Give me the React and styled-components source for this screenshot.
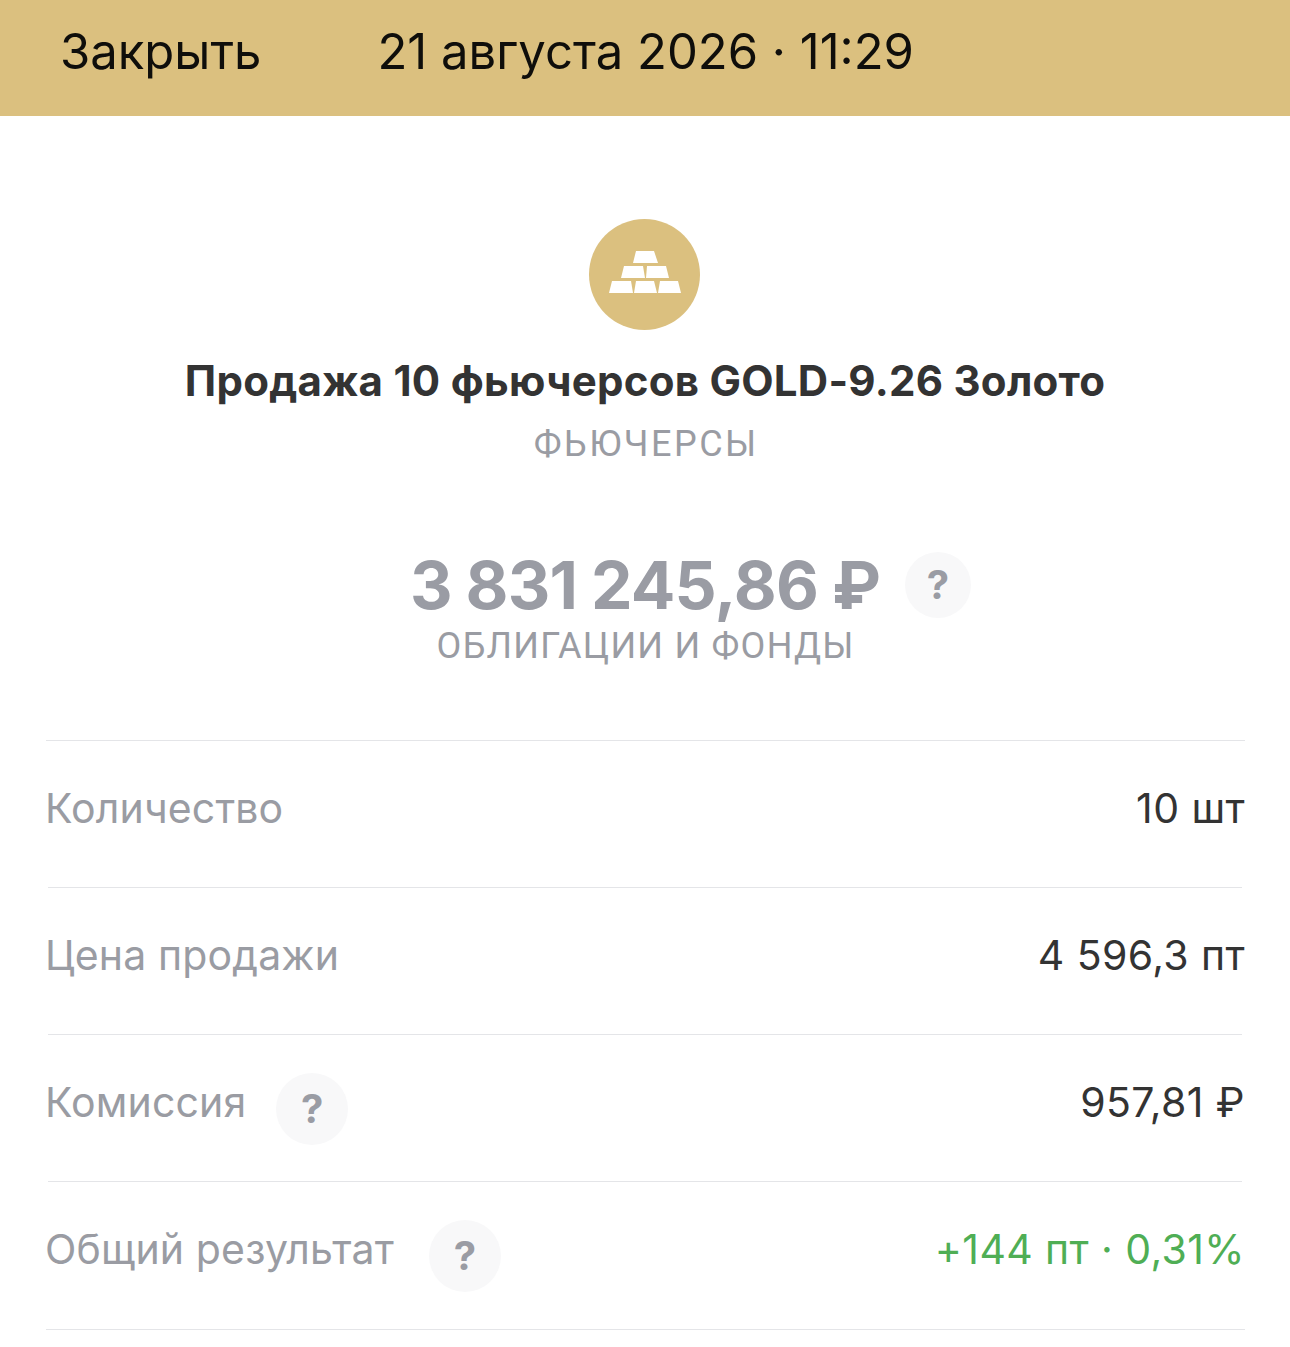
import React from "react";
import styled, { createGlobalStyle } from "styled-components";

const Global = createGlobalStyle`
  html, body {
    margin: 0;
    background: #ffffff;
  }
  body {
    font-family: Inter, Roboto, sans-serif;
  }
`;

const Page = styled.div`
  width: 1290px;
  height: 1347px;
  overflow: hidden;
  background: #ffffff;
`;

const Header = styled.header`
  height: 116px;
  padding: 0 0 14px 60px;
  box-sizing: border-box;
  display: flex;
  align-items: center;
  gap: 116px;
  background: #dbc07f;
  color: #0f0e0b;
  font-size: 49px;
`;

const Hero = styled.section`
  display: flex;
  flex-direction: column;
  align-items: center;
  padding-top: 103px;
`;

const Badge = styled.div`
  width: 111px;
  height: 111px;
  margin-right: 1px;
  padding-bottom: 5px;
  box-sizing: border-box;
  border-radius: 50%;
  background: #dbc07f;
  display: flex;
  align-items: center;
  justify-content: center;
`;

const Title = styled.h1`
  margin: 26px 0 0;
  font-size: 42px;
  line-height: 50px;
  font-weight: 700;
  letter-spacing: 0.27px;
  color: #333333;
`;

const Caption = styled.div`
  margin-top: ${(p) => p.$top}px;
  font-family: Roboto, sans-serif;
  font-size: 36px;
  line-height: 40px;
  letter-spacing: ${(p) => p.$spacing}px;
  text-indent: ${(p) => p.$spacing}px;
  color: #9a9ca3;
`;

const AmountRow = styled.div`
  margin-top: 86px;
  display: flex;
  align-items: center;
  gap: 25px;
  padding-left: 91px;
  height: 70px;
`;

const Amount = styled.div`
  font-size: 66px;
  line-height: 70px;
  font-weight: 700;
  color: #9a9ca4;
  word-spacing: -1px;
  letter-spacing: -0.8px;
`;

const Help = styled.span`
  flex: none;
  width: ${(p) => p.$size}px;
  height: ${(p) => p.$size}px;
  border-radius: 50%;
  background: #f8f8f9;
  color: #9a9ca4;
  display: flex;
  align-items: center;
  justify-content: center;
  font-size: 40px;
  line-height: 1;
  font-weight: 700;
`;

const List = styled.div`
  margin: 74px 45px 0 46px;
`;

const Divider = styled.div`
  height: 1px;
  background: #e4e5e8;
  margin: ${(p) => (p.$last ? 1 : 0)}px ${(p) => (p.$inset ? 3 : 0)}px 0 ${(p) => (p.$inset ? 2 : 0)}px;
`;

const Row = styled.div`
  height: 146px;
  margin-left: -1px;
  box-sizing: border-box;
  padding-bottom: 12px;
  display: flex;
  align-items: center;
  justify-content: space-between;
  font-size: 41px;
`;

const Label = styled.div`
  display: flex;
  align-items: center;
  gap: ${(p) => p.$gap || 31}px;
  letter-spacing: 0.15px;
  color: #9a9ca3;
`;

const Value = styled.div`
  letter-spacing: 0.4px;
  color: ${(p) => (p.$positive ? "#4fae55" : "#333333")};
`;

const RowHelp = styled(Help)`
  margin-top: 7px;
  margin-bottom: -7px;
`;

function GoldBars() {
  return (
    <svg width="72" height="42" viewBox="0 0 72 42" fill="#ffffff">
      <path d="M 27 0 H 45 L 49 12 H 24 Z" />
      <path d="M 15 15 H 34 L 36 27 H 12 Z" />
      <path d="M 38 15 H 57 L 60 27 H 37 Z" />
      <path d="M 3 30 H 22 L 24 42 H 0 Z" />
      <path d="M 27 30 H 45 L 48 42 H 25 Z" />
      <path d="M 51 30 H 69 L 72 42 H 49 Z" />
    </svg>
  );
}

export default function App() {
  return (
    <Page>
      <Global />
      <Header>
        <span>Закрыть</span>
        <span>21 августа 2026 · 11:29</span>
      </Header>
      <Hero>
        <Badge>
          <GoldBars />
        </Badge>
        <Title>Продажа 10 фьючерсов GOLD-9.26 Золото</Title>
        <Caption $top={18} $spacing={2.5}>
          ФЬЮЧЕРСЫ
        </Caption>
        <AmountRow>
          <Amount>3 831 245,86 ₽</Amount>
          <Help $size={66}>?</Help>
        </AmountRow>
        <Caption $top={6} $spacing={1.25}>
          ОБЛИГАЦИИ И ФОНДЫ
        </Caption>
      </Hero>
      <List>
        <Divider />
        <Row>
          <Label>Количество</Label>
          <Value>10 шт</Value>
        </Row>
        <Divider $inset />
        <Row>
          <Label>Цена продажи</Label>
          <Value>4 596,3 пт</Value>
        </Row>
        <Divider $inset />
        <Row>
          <Label $gap={30}>
            Комиссия
            <RowHelp $size={72}>?</RowHelp>
          </Label>
          <Value>957,81 ₽</Value>
        </Row>
        <Divider $inset />
        <Row>
          <Label $gap={35}>
            Общий результат
            <RowHelp $size={72}>?</RowHelp>
          </Label>
          <Value $positive>+144 пт · 0,31%</Value>
        </Row>
        <Divider $last />
      </List>
    </Page>
  );
}
